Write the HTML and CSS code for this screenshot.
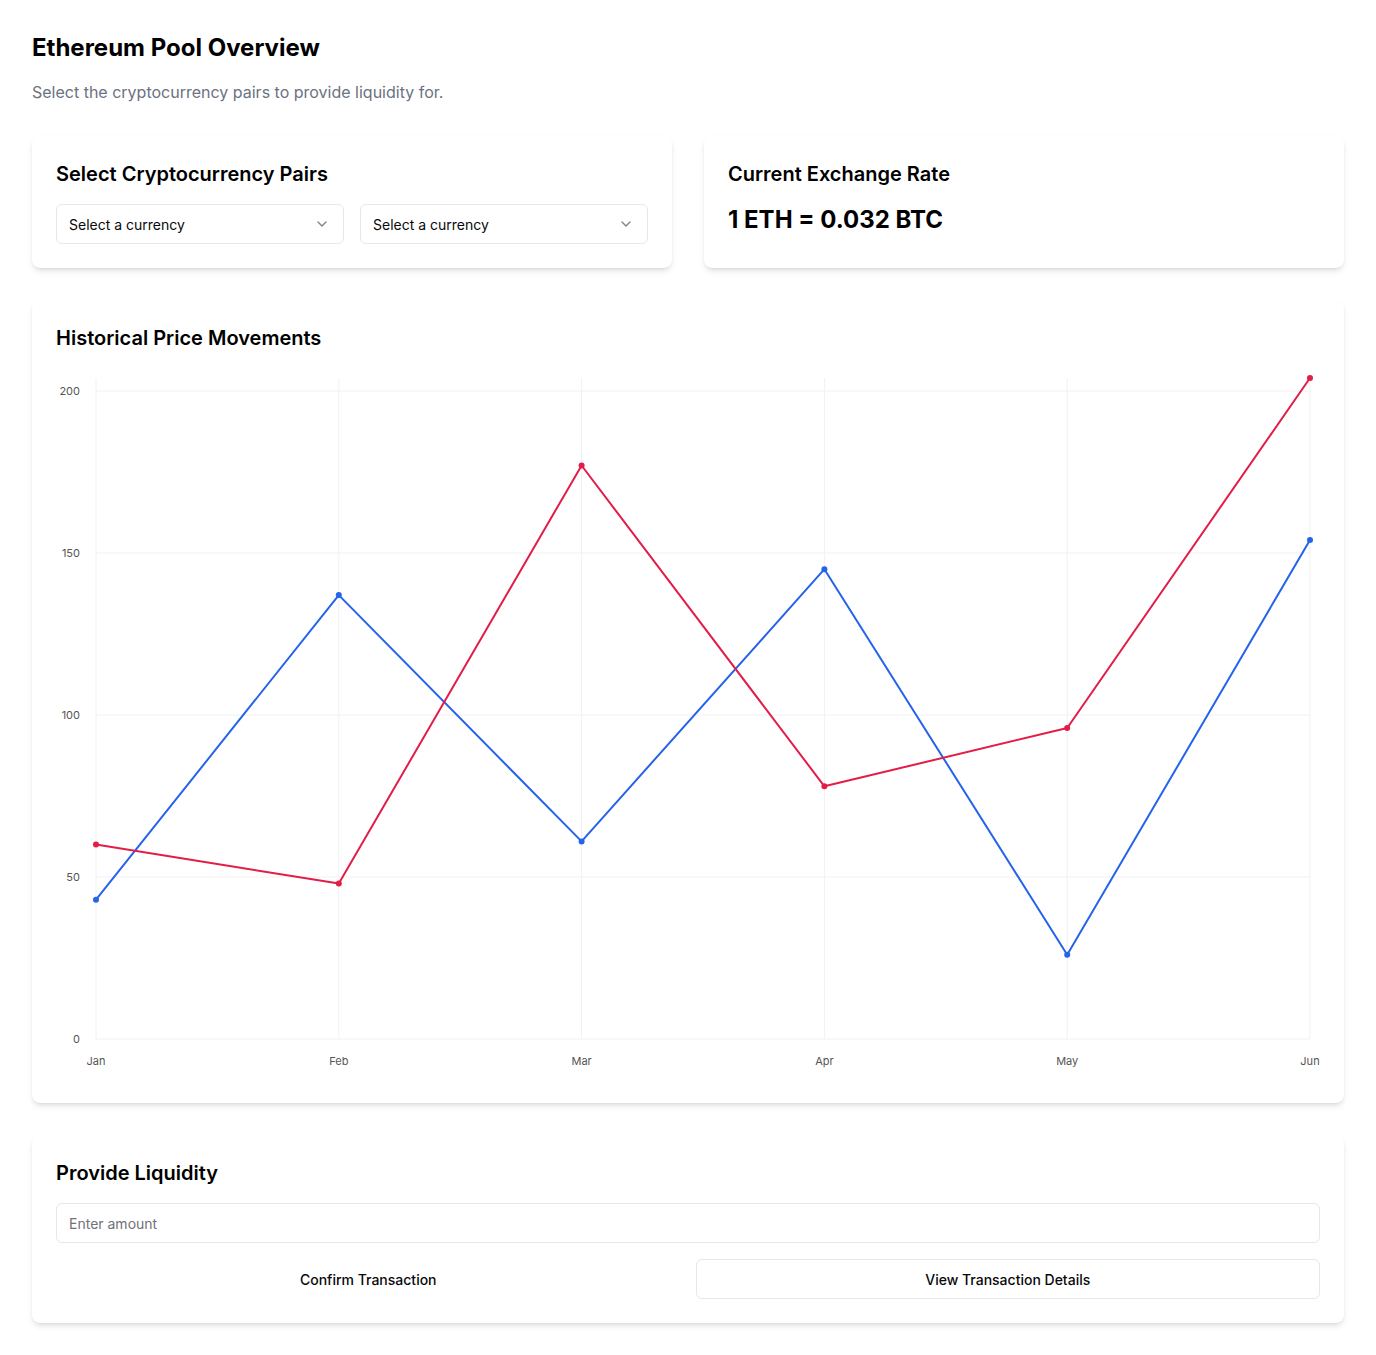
FILE: index.html
```html
<!DOCTYPE html>
<html lang="en">
<head>
<meta charset="utf-8">
<title>Ethereum Pool Overview</title>
<link rel="stylesheet" href="styles.css">
</head>
<body>
<main class="page">
  <h1 class="page-title">Ethereum Pool Overview</h1>
  <p class="page-sub">Select the cryptocurrency pairs to provide liquidity for.</p>

  <div class="top-grid">
    <section class="card">
      <h2 class="card-title">Select Cryptocurrency Pairs</h2>
      <div class="select-row">
        <button class="select" type="button">
          <span>Select a currency</span>
          <svg class="chev" viewBox="0 0 24 24" width="16" height="16" fill="none" stroke="currentColor" stroke-width="2" stroke-linecap="round" stroke-linejoin="round"><path d="m6 9 6 6 6-6"/></svg>
        </button>
        <button class="select" type="button">
          <span>Select a currency</span>
          <svg class="chev" viewBox="0 0 24 24" width="16" height="16" fill="none" stroke="currentColor" stroke-width="2" stroke-linecap="round" stroke-linejoin="round"><path d="m6 9 6 6 6-6"/></svg>
        </button>
      </div>
    </section>
    <section class="card">
      <h2 class="card-title">Current Exchange Rate</h2>
      <p class="rate">1 ETH = 0.032 BTC</p>
    </section>
  </div>

  <section class="card chart-card">
    <h2 class="card-title">Historical Price Movements</h2>
    <svg class="chart" width="1264" height="711" viewBox="0 0 1264 711">
      <g class="grid">
        <line x1="40" y1="671" x2="1254" y2="671"/>
        <line x1="40" y1="509" x2="1254" y2="509"/>
        <line x1="40" y1="347" x2="1254" y2="347"/>
        <line x1="40" y1="185" x2="1254" y2="185"/>
        <line x1="40" y1="23" x2="1254" y2="23"/>
        <line x1="40" y1="10" x2="40" y2="671"/>
        <line x1="282.8" y1="10" x2="282.8" y2="671"/>
        <line x1="525.6" y1="10" x2="525.6" y2="671"/>
        <line x1="768.4" y1="10" x2="768.4" y2="671"/>
        <line x1="1011.2" y1="10" x2="1011.2" y2="671"/>
        <line x1="1254" y1="10" x2="1254" y2="671"/>
      </g>
      <g class="ylabels">
        <text x="24" y="675">0</text>
        <text x="24" y="513">50</text>
        <text x="24" y="351">100</text>
        <text x="24" y="189">150</text>
        <text x="24" y="27">200</text>
      </g>
      <g class="xlabels">
        <text x="40" y="697">Jan</text>
        <text x="282.8" y="697">Feb</text>
        <text x="525.6" y="697">Mar</text>
        <text x="768.4" y="697">Apr</text>
        <text x="1011.2" y="697">May</text>
        <text x="1254" y="697">Jun</text>
      </g>
      <polyline class="line-blue" points="40,531.7 282.8,227.1 525.6,473.4 768.4,201.2 1011.2,586.8 1254,172.0"/>
      <polyline class="line-red" points="40,476.6 282.8,515.5 525.6,97.5 768.4,418.3 1011.2,360.0 1254,10"/>
      <g class="dots-blue">
        <circle cx="40" cy="531.7" r="3"/>
        <circle cx="282.8" cy="227.1" r="3"/>
        <circle cx="525.6" cy="473.4" r="3"/>
        <circle cx="768.4" cy="201.2" r="3"/>
        <circle cx="1011.2" cy="586.8" r="3"/>
        <circle cx="1254" cy="172.0" r="3"/>
      </g>
      <g class="dots-red">
        <circle cx="40" cy="476.6" r="3"/>
        <circle cx="282.8" cy="515.5" r="3"/>
        <circle cx="525.6" cy="97.5" r="3"/>
        <circle cx="768.4" cy="418.3" r="3"/>
        <circle cx="1011.2" cy="360.0" r="3"/>
        <circle cx="1254" cy="10" r="3"/>
      </g>
    </svg>
  </section>

  <section class="card">
    <h2 class="card-title">Provide Liquidity</h2>
    <div class="field-stack">
      <input class="input" type="text" placeholder="Enter amount">
      <div class="btn-row">
        <button class="btn btn-ghost" type="button">Confirm Transaction</button>
        <button class="btn btn-outline" type="button">View Transaction Details</button>
      </div>
    </div>
  </section>
</main>
</body>
</html>
```

FILE: styles.css
```css
* { box-sizing: border-box; }
html, body { margin: 0; padding: 0; background: #ffffff; }
body {
  font-family: Inter, "Noto Sans", "Liberation Sans", sans-serif;
  color: #09090b;
}
.page {
  padding: 32px;
  display: flex;
  flex-direction: column;
}
.page-title {
  margin: 0;
  font-size: 24px;
  line-height: 32px;
  font-weight: 700;
  color: #000;
}
.page-sub {
  margin: 16px 0 0;
  font-size: 16px;
  line-height: 24px;
  color: #6b7280;
}
.top-grid {
  margin-top: 32px;
  display: grid;
  grid-template-columns: 1fr 1fr;
  gap: 32px;
}
.card {
  background: #fff;
  border-radius: 8px;
  box-shadow: 0 4px 6px -1px rgba(0,0,0,0.1), 0 2px 4px -2px rgba(0,0,0,0.1), 0 0 1px rgba(0,0,0,0.04);
  padding: 24px;
  display: flex;
  flex-direction: column;
  gap: 16px;
}
.chart-card, .chart-card + .card { margin-top: 32px; }
.card-title {
  margin: 0;
  font-size: 20px;
  line-height: 28px;
  font-weight: 600;
  color: #000;
}
.select-row {
  display: grid;
  grid-template-columns: 1fr 1fr;
  gap: 16px;
}
.select {
  height: 40px;
  display: flex;
  align-items: center;
  justify-content: space-between;
  padding: 0 13px 0 12px;
  border: 1px solid #e5e7eb;
  border-radius: 6px;
  background: #fff;
  font-family: inherit;
  font-size: 14px;
  color: #09090b;
  text-align: left;
}
.chev { color: #09090b; opacity: 0.5; }
.rate {
  margin: 0;
  font-size: 24px;
  line-height: 32px;
  font-weight: 700;
  color: #000;
}
.chart { display: block; overflow: visible; }
.grid line { stroke: #f1f1f3; stroke-width: 1; }
.ylabels text {
  font-family: Inter, "Noto Sans", sans-serif;
  font-size: 11px;
  fill: #555;
  text-anchor: end;
}
.xlabels text {
  font-family: Inter, "Noto Sans", sans-serif;
  font-size: 11px;
  fill: #555;
  text-anchor: middle;
}
.line-blue { fill: none; stroke: #2563eb; stroke-width: 2; stroke-linejoin: round; }
.line-red { fill: none; stroke: #e11d48; stroke-width: 2; stroke-linejoin: round; }
.dots-blue circle { fill: #2563eb; }
.dots-red circle { fill: #e11d48; }
.field-stack {
  display: flex;
  flex-direction: column;
  gap: 16px;
}
.input {
  height: 40px;
  width: 100%;
  border: 1px solid #e5e7eb;
  border-radius: 6px;
  padding: 0 12px;
  font-family: inherit;
  font-size: 14px;
  color: #09090b;
  background: #fff;
  outline: none;
}
.input::placeholder { color: #71717a; }
.btn-row {
  display: grid;
  grid-template-columns: 1fr 1fr;
  gap: 15px;
}
.btn {
  height: 40px;
  border-radius: 6px;
  font-family: inherit;
  font-size: 14px;
  font-weight: 500;
  color: #09090b;
  background: #fff;
  cursor: pointer;
}
.btn-ghost { border: 1px solid transparent; }
.btn-outline { border: 1px solid #e5e7eb; }
```
